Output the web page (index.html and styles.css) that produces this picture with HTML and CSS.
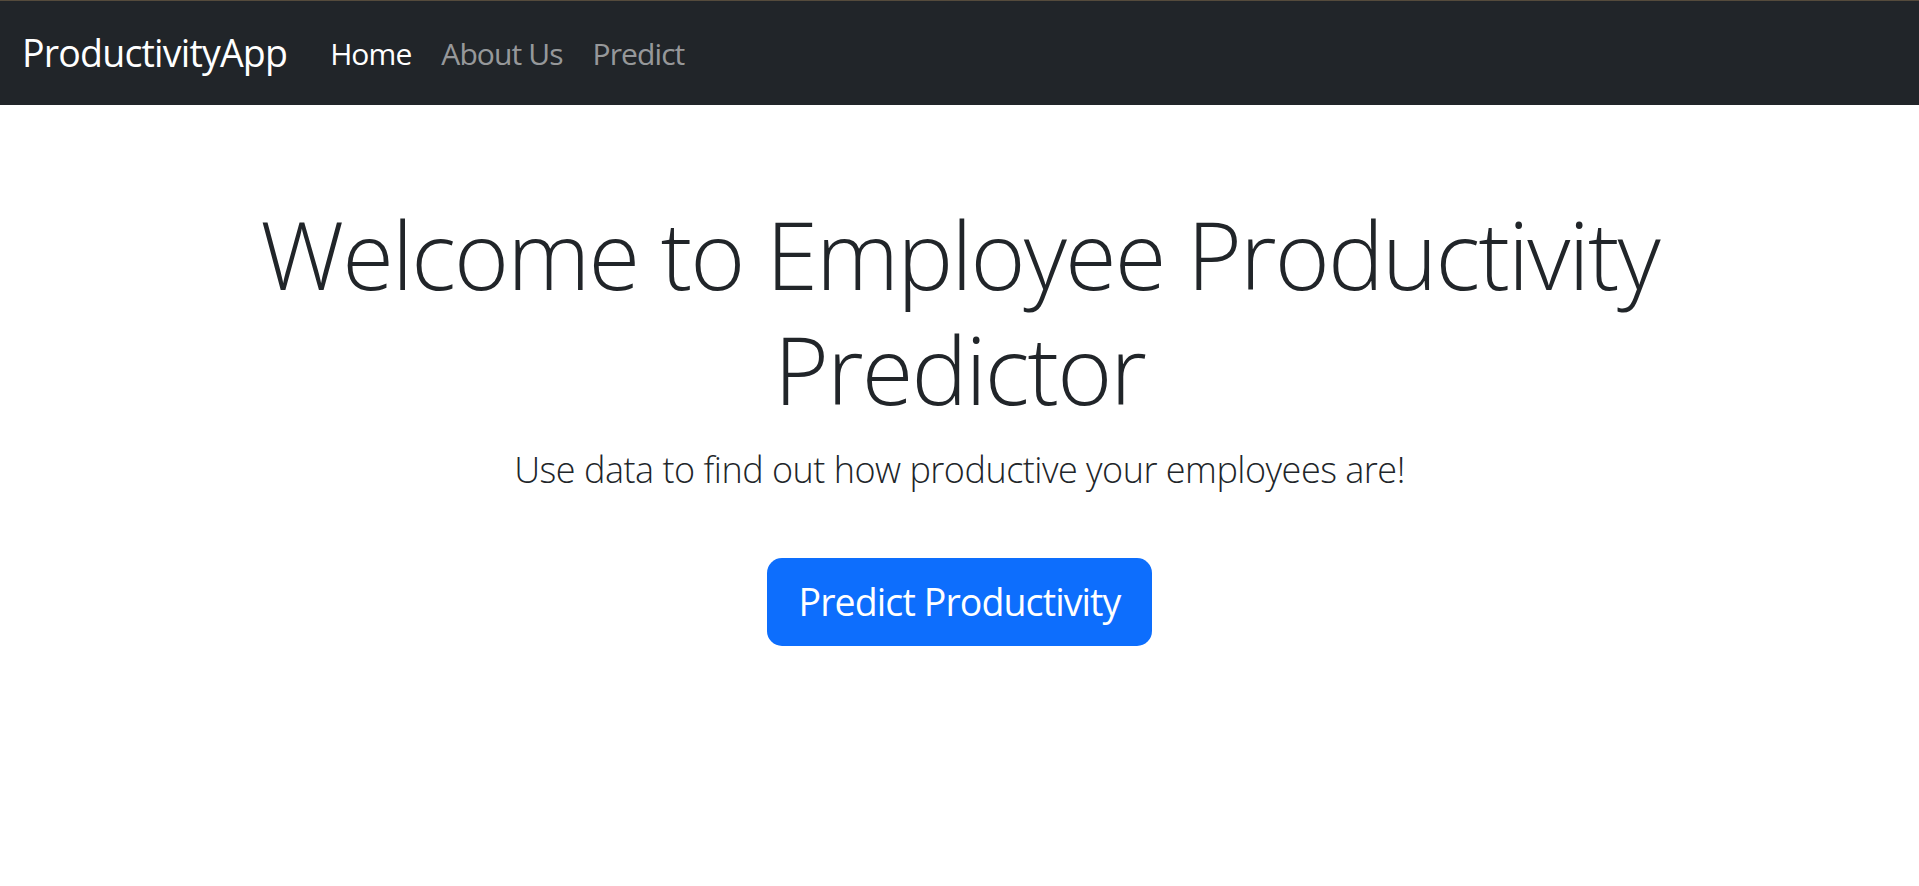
FILE: index.html
```html
<!DOCTYPE html>
<html lang="en">
<head>
<meta charset="utf-8">
<title>ProductivityApp</title>
<link rel="stylesheet" href="styles.css">
</head>
<body>
<nav class="navbar">
  <div class="nav-inner">
    <a class="brand" href="#">ProductivityApp</a>
    <ul class="nav-links">
      <li><a class="nav-link active" href="#">Home</a></li>
      <li><a class="nav-link" href="#">About Us</a></li>
      <li><a class="nav-link" href="#">Predict</a></li>
    </ul>
  </div>
</nav>
<main class="hero">
  <h1 class="display">Welcome to Employee Productivity Predictor</h1>
  <p class="lead">Use data to find out how productive your employees are!</p>
  <a class="btn-primary" href="#">Predict Productivity</a>
</main>
</body>
</html>
```
FILE: styles.css
```css
* { box-sizing: border-box; }
html, body { margin: 0; padding: 0; }
body {
  font-family: "Open Sans", "Noto Sans", sans-serif;
  color: #212529;
  background: #fff;
}
.navbar {
  background: #212529;
  border-top: 1px solid #554b3c;
  height: 105px;
}
.nav-inner {
  display: flex;
  align-items: center;
  height: 100%;
  padding: 0 22px;
}
.brand {
  color: #fff;
  text-decoration: none;
  font-size: 37.5px;
  letter-spacing: -0.8px;
  line-height: 56px;
  margin-right: 28px;
}
.nav-links {
  display: flex;
  list-style: none;
  margin: 0;
  padding: 0;
}
.nav-link {
  display: block;
  padding: 0 15px;
  font-size: 30px;
  letter-spacing: -0.9px;
  line-height: 45px;
  color: rgba(255,255,255,0.55);
  text-decoration: none;
}
.nav-link.active { color: #fff; }
.hero {
  display: flex;
  flex-direction: column;
  align-items: center;
  text-align: center;
  width: 1800px;
  margin: 0 auto;
  padding: 92px 22px 0;
}
.display {
  font-size: 94px;
  font-weight: 300;
  letter-spacing: -1.9px;
  line-height: 115px;
  margin: 0 0 15px;
}
.lead {
  font-size: 36px;
  font-weight: 300;
  letter-spacing: -0.5px;
  line-height: 56px;
  margin: 0 0 60px;
}
.btn-primary {
  display: inline-block;
  background: #0d6efd;
  color: #fff;
  text-decoration: none;
  font-size: 37.5px;
  letter-spacing: -0.9px;
  line-height: 56px;
  padding: 16px 32px;
  border-radius: 15px;
}
```
